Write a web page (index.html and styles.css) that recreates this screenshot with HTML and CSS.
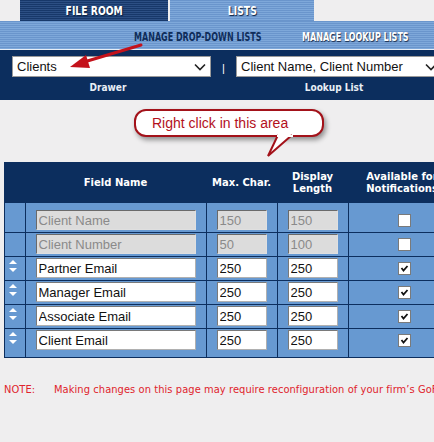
FILE: index.html
```html
<!DOCTYPE html>
<html lang="en">
<head>
  <meta charset="UTF-8" />
  <title>Lists - Manage Drop-Down Lists</title>
  <link rel="stylesheet" href="styles.css">
</head>
<body>
  <div class="tabs">
    <div class="tab tab-dark"><span>FILE ROOM</span></div>
    <div class="tab tab-light"><span>LISTS</span></div>
  </div>

  <div class="subnav">
    <div class="sub-item"><span class="sub-active">MANAGE DROP-DOWN LISTS</span></div>
    <div class="sub-item"><span class="sub-link">MANAGE LOOKUP LISTS</span></div>
  </div>

  <div class="picker">
    <div class="picker-row">
      <div class="select select-drawer">
        <span>Clients</span>
        <svg class="chev" width="12" height="8" viewBox="0 0 12 8"><path d="M1 1.5 L6 6.5 L11 1.5" fill="none" stroke="#222" stroke-width="1.6"/></svg>
      </div>
      <span class="sep">|</span>
      <div class="select select-lookup">
        <span>Client Name, Client Number</span>
        <svg class="chev" width="12" height="8" viewBox="0 0 12 8"><path d="M1 1.5 L6 6.5 L11 1.5" fill="none" stroke="#222" stroke-width="1.6"/></svg>
      </div>
    </div>
    <div class="picker-labels">
      <span class="label-drawer">Drawer</span>
      <span class="label-lookup">Lookup List</span>
    </div>
  </div>

  <!-- annotation arrow over the drawer select -->
  <svg class="arrow" width="160" height="80" viewBox="0 0 160 80">
    <line x1="141" y1="45" x2="84" y2="62" stroke="#c4121b" stroke-width="3" stroke-linecap="round"/>
    <polygon points="70,67 86,55 90,68" fill="#c4121b"/>
  </svg>

  <div class="callout-area">
    <div class="callout">
      Right click in this area
      <svg class="callout-tail" width="30" height="24" viewBox="0 0 30 24">
        <path d="M2 0 L-8 21 L16 0" fill="#fff" stroke="#a3121a" stroke-width="2" transform="translate(10 0)"/>
        <rect x="11" y="0" width="16" height="2" fill="#fff"/>
      </svg>
    </div>
  </div>

  <table class="fields">
    <thead>
      <tr>
        <th class="col-handle"></th>
        <th class="col-name">Field Name</th>
        <th class="col-num">Max. Char.</th>
        <th class="col-num">Display<br>Length</th>
        <th class="col-notify">Available for<br>Notifications</th>
      </tr>
    </thead>
    <tbody>
      <tr class="first">
        <td></td>
        <td class="cell-name"><input class="in-name" type="text" value="Client Name" disabled></td>
        <td><input class="in-num" type="text" value="150" disabled></td>
        <td><input class="in-num" type="text" value="150" disabled></td>
        <td class="cell-check"><span class="check"></span></td>
      </tr>
      <tr>
        <td></td>
        <td class="cell-name"><input class="in-name" type="text" value="Client Number" disabled></td>
        <td><input class="in-num" type="text" value="50" disabled></td>
        <td><input class="in-num" type="text" value="100" disabled></td>
        <td class="cell-check"><span class="check"></span></td>
      </tr>
      <tr>
        <td class="cell-handle"><svg width="10" height="14" viewBox="0 0 10 14"><path d="M1 5 L5 1 L9 5 Z M1 9 L5 13 L9 9 Z" fill="#fff"/></svg></td>
        <td class="cell-name"><input class="in-name" type="text" value="Partner Email"></td>
        <td><input class="in-num" type="text" value="250"></td>
        <td><input class="in-num" type="text" value="250"></td>
        <td class="cell-check"><span class="check on"><svg width="11" height="11" viewBox="0 0 11 11"><path d="M2.5 5 L4.5 7.5 L8.5 3" fill="none" stroke="#111" stroke-width="1.8"/></svg></span></td>
      </tr>
      <tr>
        <td class="cell-handle"><svg width="10" height="14" viewBox="0 0 10 14"><path d="M1 5 L5 1 L9 5 Z M1 9 L5 13 L9 9 Z" fill="#fff"/></svg></td>
        <td class="cell-name"><input class="in-name" type="text" value="Manager Email"></td>
        <td><input class="in-num" type="text" value="250"></td>
        <td><input class="in-num" type="text" value="250"></td>
        <td class="cell-check"><span class="check on"><svg width="11" height="11" viewBox="0 0 11 11"><path d="M2.5 5 L4.5 7.5 L8.5 3" fill="none" stroke="#111" stroke-width="1.8"/></svg></span></td>
      </tr>
      <tr>
        <td class="cell-handle"><svg width="10" height="14" viewBox="0 0 10 14"><path d="M1 5 L5 1 L9 5 Z M1 9 L5 13 L9 9 Z" fill="#fff"/></svg></td>
        <td class="cell-name"><input class="in-name" type="text" value="Associate Email"></td>
        <td><input class="in-num" type="text" value="250"></td>
        <td><input class="in-num" type="text" value="250"></td>
        <td class="cell-check"><span class="check on"><svg width="11" height="11" viewBox="0 0 11 11"><path d="M2.5 5 L4.5 7.5 L8.5 3" fill="none" stroke="#111" stroke-width="1.8"/></svg></span></td>
      </tr>
      <tr class="last">
        <td class="cell-handle"><svg width="10" height="14" viewBox="0 0 10 14"><path d="M1 5 L5 1 L9 5 Z M1 9 L5 13 L9 9 Z" fill="#fff"/></svg></td>
        <td class="cell-name"><input class="in-name" type="text" value="Client Email"></td>
        <td><input class="in-num" type="text" value="250"></td>
        <td><input class="in-num" type="text" value="250"></td>
        <td class="cell-check"><span class="check on"><svg width="11" height="11" viewBox="0 0 11 11"><path d="M2.5 5 L4.5 7.5 L8.5 3" fill="none" stroke="#111" stroke-width="1.8"/></svg></span></td>
      </tr>
    </tbody>
  </table>

  <p class="note"><span class="note-label">NOTE:</span>Making changes on this page may require reconfiguration of your firm’s GoFileRoom settings.</p>
</body>
</html>
```

FILE: styles.css
```css
html, body {
  margin: 0;
  padding: 0;
  overflow: hidden;
}
body {
  background-color: #efeeef;
  font-family: Arial, "Liberation Sans", sans-serif;
  position: relative;
  width: 434px;
  height: 442px;
}
.tabs {
  display: flex;
  gap: 2px;
  padding-left: 20px;
  height: 21px;
}
.tab {
  display: flex;
  align-items: center;
  justify-content: center;
  font-family: "DejaVu Sans Condensed", "DejaVu Sans", sans-serif;
  font-weight: bold;
  font-size: 13px;
  color: #fff;
  text-shadow: 1px 1px 1px #0a1f40;
  flex-shrink: 0;
}
.tab span {
  display: inline-block;
  transform: scaleX(0.79);
}
.tab-dark {
  width: 148px;
  background: repeating-linear-gradient(to bottom, #17386a 0 1px, #2c4f84 1px 2px);
}
.tab-light {
  width: 144px;
  background: repeating-linear-gradient(to bottom, #6a95cc 0 1px, #7ea8da 1px 2px);
}
.subnav {
  display: flex;
  align-items: center;
  padding-left: 134px;
  padding-top: 2px;
  box-sizing: border-box;
  height: 29px;
  background: repeating-linear-gradient(to bottom, #6a95cc 0 1px, #7ea8da 1px 2px);
  border-bottom: 1px solid #e6edf6;
  font-family: "DejaVu Sans Condensed", "DejaVu Sans", sans-serif;
  font-weight: bold;
  font-size: 13px;
  white-space: nowrap;
}
.sub-item {
  width: 168px;
  flex-shrink: 0;
}
.sub-item span {
  display: inline-block;
  transform: scaleX(0.685);
  transform-origin: left center;
}
.sub-active {
  color: #0f2d5a;
}
.sub-link {
  color: #fff;
  text-shadow: 1px 1px 1px #1c3050;
}
.picker {
  background-color: #0c2e5e;
  height: 50px;
  padding-left: 12px;
  box-sizing: border-box;
  padding-top: 6px;
}
.picker-row {
  display: flex;
  align-items: center;
}
.select {
  display: flex;
  align-items: center;
  justify-content: space-between;
  flex-shrink: 0;
  height: 21px;
  box-sizing: border-box;
  background: #fff;
  border: 1px solid #9a9a9a;
  padding: 0 4px 0 4px;
  font-size: 13px;
  color: #111;
}
.select-drawer {
  width: 199px;
}
.select-lookup {
  width: 206px;
}
.sep {
  color: #fff;
  font-size: 11px;
  width: 25px;
  flex-shrink: 0;
  text-align: center;
  padding-top: 3px;
}
.picker-labels {
  display: flex;
  margin-top: 5px;
  font-family: "DejaVu Sans Condensed", "DejaVu Sans", sans-serif;
  font-weight: bold;
  font-size: 10px;
  color: #e8eef6;
}
.label-drawer {
  width: 192px;
  flex-shrink: 0;
  text-align: center;
}
.label-lookup {
  width: 260px;
  flex-shrink: 0;
  text-align: center;
}
.arrow {
  position: absolute;
  left: 0;
  top: 0;
}
.callout-area {
  height: 62px;
  padding-top: 9px;
  box-sizing: border-box;
}
.callout {
  position: relative;
  margin-left: 134px;
  width: 190px;
  height: 28px;
  box-sizing: border-box;
  border: 2px solid #a3121a;
  border-radius: 12px;
  background: #fff;
  box-shadow: 2px 3px 5px rgba(0, 0, 0, 0.4);
  color: #b3101c;
  font-size: 14px;
  padding: 4px 0 0 16px;
}
.callout-tail {
  position: absolute;
  left: 130px;
  top: 24px;
  overflow: visible;
}
.fields {
  margin-left: 4px;
  border-collapse: collapse;
  border: 1px solid #0c2e5e;
  background-color: #6799d1;
  table-layout: fixed;
  width: 452px;
}
.fields th {
  background-color: #0c2e5e;
  color: #fff;
  font-family: "DejaVu Sans", sans-serif;
  font-size: 10px;
  font-weight: bold;
  height: 39px;
  padding: 0;
  line-height: 12px;
}
.col-handle { width: 20px; }
.col-name { width: 181px; }
.col-num { width: 71px; }
.col-notify { width: 108px; }
.fields td {
  border: 1px solid #0c2e5e;
  padding: 1px 0 2px 10px;
  height: 20px;
}
.fields tr.first td {
  padding-top: 7px;
}
.fields tr.last td {
  padding-bottom: 7px;
}
.fields td.cell-handle {
  padding-left: 3px;
  vertical-align: middle;
}
.fields td.cell-check {
  text-align: center;
  padding-left: 0;
}
.fields input {
  display: block;
  box-sizing: border-box;
  height: 20px;
  margin: 0;
  padding: 0 2px;
  font-family: Arial, "Liberation Sans", sans-serif;
  font-size: 13px;
  color: #111;
  background: #fff;
  border: 1px solid #7a7a7a;
  border-right-color: #b0b0b0;
  border-bottom-color: #b0b0b0;
}
.fields input:disabled {
  background: #dcdcdc;
  color: #8a8a8a;
  border-color: #6a6a6a #e0e0e0 #e0e0e0 #6a6a6a;
}
.in-name { width: 160px; }
.in-num { width: 50px; }
.check {
  display: inline-block;
  width: 13px;
  height: 13px;
  box-sizing: border-box;
  background: #fff;
  border: 1px solid #7a7a7a;
  vertical-align: middle;
  margin-left: 4px;
}
.check svg {
  display: block;
}
.note {
  margin: 25px 0 0 4px;
  white-space: nowrap;
  font-family: "DejaVu Sans Condensed", "DejaVu Sans", sans-serif;
  font-size: 11px;
  letter-spacing: 0.07px;
  color: #e0232c;
}
.note-label {
  display: inline-block;
  width: 50px;
}
```
